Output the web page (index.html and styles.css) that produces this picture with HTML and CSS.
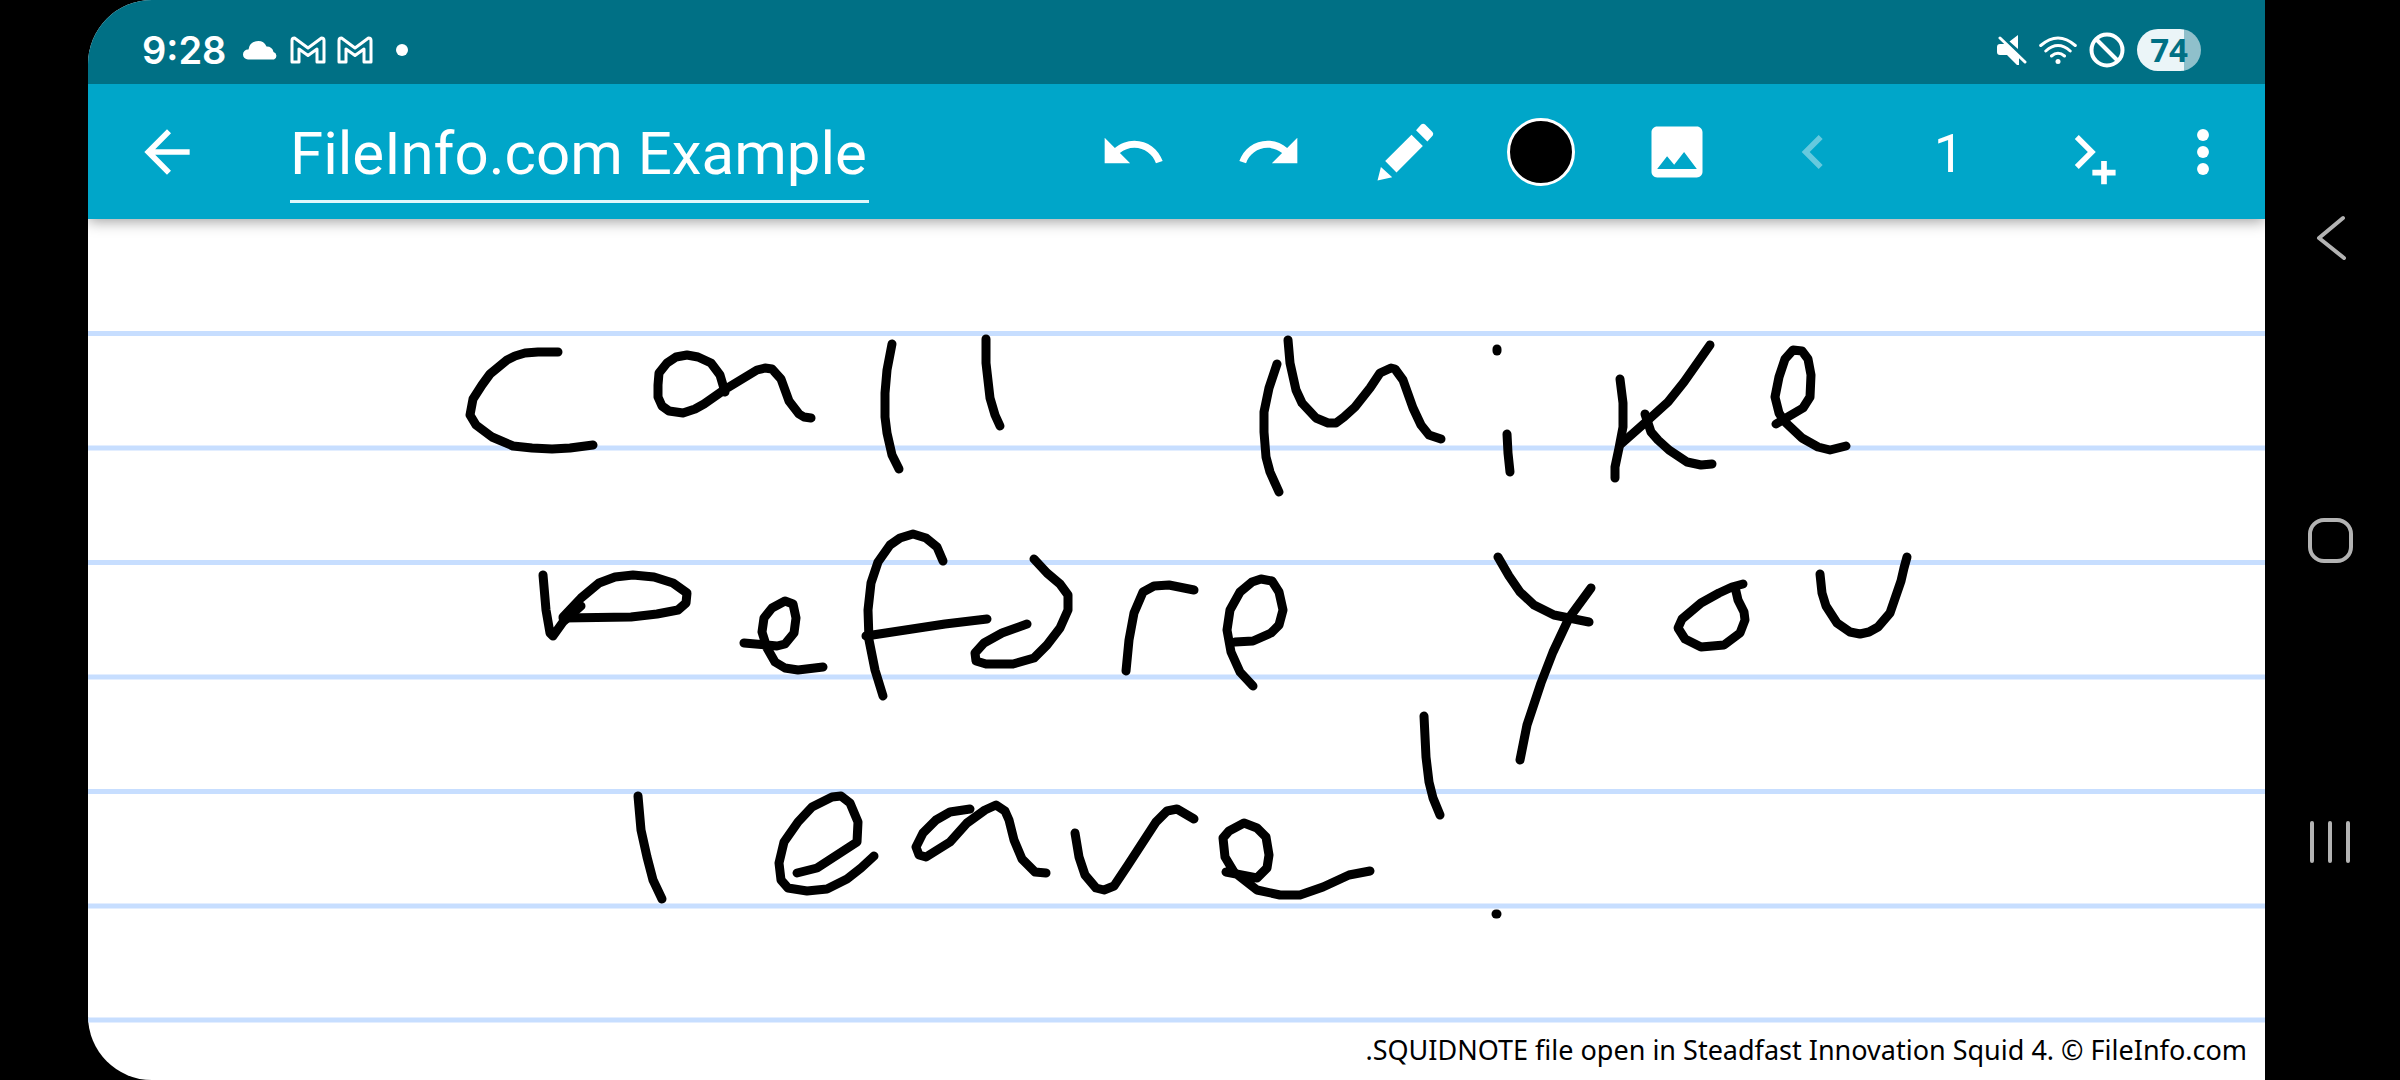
FILE: index.html
```
<!DOCTYPE html>
<html lang="en">
<head>
  <meta charset="utf-8">
  <title>FileInfo.com Example</title>
  <link rel="stylesheet" href="styles.css">
</head>
<body>

<div class="device">
  <main class="screen">
    <div class="status-bar">
      <div class="status-left">
        <span class="clock">9:28</span>
        <svg class="status-cloud" viewBox="0 0 36 20"><path d="M5 19.500a5 5 0 0 1 0-10h.5A9.500 9.500 0 0 1 23.500 6.500a7 7 0 0 1 7 5.500a4 4 0 0 1 .5 7.500z" fill="#fff"/></svg>
        <svg class="status-mail" viewBox="0 0 36 28"><path d="M2 26V4.500Q2 2 4.500 2L18 12 31.500 2Q34 2 34 4.500V26H27V13L18 19.500 9 13V26Z"/></svg>
        <svg class="status-mail" viewBox="0 0 36 28"><path d="M2 26V4.500Q2 2 4.500 2L18 12 31.500 2Q34 2 34 4.500V26H27V13L18 19.500 9 13V26Z"/></svg>
        <span class="status-dot"></span>
      </div>
      <div class="status-right">
        <svg class="status-mute" viewBox="0 0 30 30"><path d="M3 9H9L22 21V30H20L10 20H3Q0 20 0 17V12Q0 9 3 9ZM21 0V14L12.500 6.500Z" fill="#fff"/><path d="M3 3L28 27" fill="none" stroke="#fff" stroke-width="3" stroke-linecap="round"/></svg>
        <svg class="status-wifi" viewBox="0 0 38 28"><g fill="none" stroke="#fff" stroke-width="3" stroke-linecap="round"><path d="M1.700 9.500Q19-5.500 36.300 9.500M6.800 15Q19 4 31.200 15M12.500 20Q19 14.500 25.500 20"/></g><circle cx="19" cy="25.500" r="2.500" fill="#fff"/></svg>
        <svg class="status-block" viewBox="0 0 36 36"><g fill="none" stroke="#fff" stroke-width="4"><circle cx="18" cy="18" r="15.500"/><path d="M7.500 7.500L28.500 28.500"/></g></svg>
        <span class="battery">74</span>
      </div>
    </div>

    <header class="toolbar">
      <button class="back" aria-label="Back"><svg class="icon" viewBox="0 0 24 24"><path d="M20 11H7.830l5.590-5.590L12 4l-8 8 8 8 1.410-1.410L7.830 13H20v-2z"/></svg></button>
      <input class="title" type="text" aria-label="Note title" value="FileInfo.com Example">
      <div class="tools">
        <button class="tool" aria-label="Undo"><svg class="icon" viewBox="0 0 24 24"><path d="M12.500 8c-2.650 0-5.050.99-6.900 2.600L2 7v9h9l-3.620-3.620c1.390-1.160 3.160-1.880 5.120-1.880 3.540 0 6.550 2.310 7.600 5.500l2.370-.78C21.080 11.030 17.150 8 12.500 8z"/></svg></button>
        <button class="tool" aria-label="Redo"><svg class="icon" viewBox="0 0 24 24"><path d="M18.400 10.600C16.550 8.990 14.150 8 11.500 8c-4.650 0-8.580 3.030-9.960 7.220L3.900 16c1.050-3.190 4.050-5.500 7.600-5.500 1.950 0 3.730.72 5.120 1.880L13 16h9V7l-3.600 3.600z"/></svg></button>
        <button class="tool" aria-label="Pen"><svg class="icon" viewBox="0 0 24 24"><path d="M17.700 2.300Q18.400 1.800 19.100 2.300L21.700 4.900Q22.200 5.500 21.800 6.200L19.900 8.300 15.900 4.300ZM14.300 5.900L18.300 9.900 9 19.200 5 15.200ZM3.500 17.300L7.500 20.900 2.300 22.100Z"/></svg></button>
        <button class="tool" aria-label="Colour"><span class="swatch"></span></button>
        <button class="tool" aria-label="Insert image"><svg class="icon" viewBox="0 0 24 24"><path d="M21 19V5c0-1.100-.9-2-2-2H5c-1.100 0-2 .9-2 2v14c0 1.100.9 2 2 2h14c1.100 0 2-.9 2-2zM8.500 13.500l2.500 3.010L14.500 12l4.500 6H5l3.500-4.500z"/></svg></button>
        <button class="tool" aria-label="Previous page" disabled><svg class="icon" viewBox="0 0 24 24"><path d="M15.410 7.410L14 6l-6 6 6 6 1.410-1.410L10.830 12z"/></svg></button>
        <button class="tool page-number">1</button>
        <button class="tool" aria-label="Add page"><svg class="icon" viewBox="0 0 24 24"><path d="M9.800 6l6 6-6 6-1.400-1.400 4.600-4.600-4.600-4.600zM17.700 15.200h2v3.100h3.100v2h-3.100v3.100h-2v-3.100h-3.100v-2h3.100z"/></svg></button>
        <button class="tool more" aria-label="More options"><svg class="icon" viewBox="0 0 24 24"><circle cx="12" cy="6" r="2.100"/><circle cx="12" cy="12" r="2.100"/><circle cx="12" cy="18" r="2.100"/></svg></button>
      </div>
    </header>

    <section class="note">
      <svg class="page" viewBox="88 219 2177 861" preserveAspectRatio="xMinYMin slice" role="img" aria-label="Call Mike before you leave!">
        <path class="rule" d="M88 333.500H2265M88 448H2265M88 562.500H2265M88 677H2265M88 791.500H2265M88 906H2265M88 1020H2265"/>
        <g class="ink">
          <!-- call -->
          <path d="M558 352H538L525 353 515 356 507 360 490 374 482 385 473 399 470 415 476 425 492 437 513 446 532 448 552 449 570 448 593 445"/>
          <path d="M725 392L720 375 711 363 698 357 687 355 676 357 667 363 659 373 658 385 658 397 662 406 669 411 683 413 695 409 704 404 724 390 757 370 765 368 772 369 781 379 789 401 799 414 804 417 811 418"/>
          <path d="M892 344L887 370 885 393 885 417 887 433 892 455 899 469"/>
          <path d="M986 339L986 363 990 398 995 415 1000 426"/>
          <!-- mike -->
          <path d="M1277 364L1269 388 1264 412 1264 432 1266 457 1270 472 1279 492"/>
          <path d="M1288 340L1290 363 1296 390 1302 403 1316 418 1328 423 1336 423 1344 417 1355 407 1370 388 1380 373 1391 368 1395 369 1403 380 1413 408 1421 425 1429 435 1441 439"/>
          <path d="M1497 349V351"/>
          <path d="M1507 434L1508 453 1510 472"/>
          <path d="M1620 379L1623 403 1623 427 1619 448 1615 467 1615 478"/>
          <path d="M1710 345L1684 382 1668 402 1647 421 1621 444"/>
          <path d="M1645 414L1651 432 1658 440 1669 450 1687 462 1701 465 1712 464"/>
          <path d="M1776 424L1803 408 1810 397 1811 375 1808 359 1802 351 1793 350 1785 359 1779 377 1775 397 1779 413 1784 421 1802 438 1818 447 1830 450 1846 446"/>
          <!-- before -->
          <path d="M543 575L546 610 550 633 553 636 563 622 581 606"/>
          <path d="M563 617L581 598 599 583 615 577 633 575 654 577 673 583 687 593 686 603 678 610 657 614 631 617 563 618"/>
          <path d="M744 643L777 646 785 644 794 633 796 618 793 604 785 601 772 608 764 618 762 632 767 648 775 662 785 668 798 670 823 667"/>
          <path d="M943 561L937 547 926 538 913 534 900 538 890 545 878 562 871 583 868 610 869 640 875 670 883 696"/>
          <path d="M866 636L945 624 987 619"/>
          <path d="M1034 559L1047 573 1060 584 1068 595 1068 610 1060 628 1047 645 1034 658 1013 664 986 664 976 661 975 653 984 643 1002 633 1027 624"/>
          <path d="M1126 671L1129 640 1134 613 1143 592 1154 586 1169 585 1194 590"/>
          <path d="M1235 642L1253 641 1271 633 1279 625 1283 610 1279 592 1272 581 1261 579 1252 582 1240 592 1230 610 1227 630 1231 652 1240 672 1253 686"/>
          <!-- you -->
          <path d="M1498 557L1509 576 1520 592 1534 605 1554 615 1589 622"/>
          <path d="M1591 588L1569 618 1553 652 1541 683 1527 725 1520 760"/>
          <path d="M1743 584L1732 587 1719 593 1701 603 1682 619 1678 628 1685 639 1701 647 1724 645 1740 633 1745 620 1744 612 1738 600 1735 587"/>
          <path d="M1820 574L1822 593 1826 606 1837 623 1850 632 1860 634 1869 632 1878 627 1890 613 1901 581 1904 568 1907 557"/>
          <!-- leave! -->
          <path d="M638 796L641 830 647 857 653 880 662 899"/>
          <path d="M797 873L817 868 857 842 858 822 850 803 841 796 832 797 812 807 798 822 784 842 779 863 781 880 788 888 807 891 827 889 847 879 861 868 874 856"/>
          <path d="M970 809L950 812 936 820 923 833 916 847 919 855 926 857 950 842 967 823 985 810 996 805 1005 811 1009 820 1014 840 1022 859 1035 872 1046 873"/>
          <path d="M1075 833L1079 857 1085 875 1096 888 1104 890 1114 886 1128 865 1156 822 1167 811 1177 809 1194 819"/>
          <path d="M1226 872L1257 878 1267 868 1269 855 1266 837 1257 828 1244 823 1229 831 1223 838 1225 857 1234 872 1257 890 1280 895 1300 895 1323 887 1349 875 1370 871"/>
          <path d="M1424 716L1426 757 1429 782 1433 798 1440 815"/>
          <path d="M1496 914H1497"/>
        </g>
      </svg>
      <p class="caption">.SQUIDNOTE file open in Steadfast Innovation Squid 4. © FileInfo.com</p>
    </section>
  </main>

  <nav class="nav-bar">
    <button aria-label="Back"><svg viewBox="0 0 48 48"><path d="M37 4L13 24 38 44"/></svg></button>
    <button aria-label="Home"><svg viewBox="0 0 48 48"><rect x="4" y="4" width="41" height="41" rx="14"/></svg></button>
    <button aria-label="Recent apps"><svg viewBox="0 0 48 48"><path d="M6 5V43M24 5V43M42 5V43"/></svg></button>
  </nav>
</div>

</body>
</html>
```

FILE: styles.css
```
* {
  box-sizing: border-box;
}
body {
  margin: 0;
  background: #000;
  font-family: Roboto, sans-serif;
}
button {
  padding: 0;
  border: 0;
  background: none;
  color: #fff;
  font: inherit;
}
svg {
  display: block;
}
.device {
  display: flex;
  height: 100vh;
  padding-left: 88px;
}
.screen {
  flex: 1;
  min-width: 0;
  display: flex;
  flex-direction: column;
  overflow: hidden;
  background: #fff;
  border-radius: 64px 0 0 64px;
}

/* status bar */
.status-bar {
  position: relative;
  z-index: 2;
  display: flex;
  justify-content: space-between;
  height: 84px;
  padding: 16px 64px 0 54px;
  background: #007085;
  color: #fff;
}
.status-left,
.status-right {
  display: flex;
  align-items: center;
}
.status-left {
  gap: 11px;
}
.status-right {
  gap: 12px;
}
.clock {
  margin-right: 6px;
  font: 600 38px/68px Inter, sans-serif;
}
.status-cloud {
  width: 36px;
  height: 20px;
}
.status-mail {
  width: 36px;
  height: 28px;
  fill: none;
  stroke: #fff;
  stroke-width: 3;
  stroke-linejoin: round;
}
.status-dot {
  width: 12px;
  height: 12px;
  margin-left: 12px;
  border-radius: 50%;
  background: #fff;
}
.status-mute {
  width: 30px;
  height: 30px;
}
.status-wifi {
  width: 38px;
  height: 28px;
}
.status-block {
  width: 36px;
  height: 36px;
}
.battery {
  width: 64px;
  height: 42px;
  border-radius: 21px;
  background: linear-gradient(to right, #ebf5f8 74%, #8fc0cb 74%);
  color: #007085;
  font: bold 33px/42px "Open Sans", sans-serif;
  text-align: center;
}

/* toolbar */
.toolbar {
  position: relative;
  z-index: 1;
  display: flex;
  align-items: center;
  height: 135px;
  background: #00a6c9;
  box-shadow: 0 2px 14px rgba(0, 0, 0, 0.4);
}
.icon {
  width: 68px;
  height: 68px;
  margin: 0 auto;
  fill: #fff;
}
.back {
  width: 158px;
}
.title {
  width: 579px;
  height: 102px;
  margin: 0 0 0 44px;
  padding: 6px 0 0;
  border: 0;
  border-bottom: 3px solid #e0f7fb;
  background: none;
  color: #fff;
  font: 60px Roboto, sans-serif;
}
.tools {
  display: flex;
  align-items: center;
  margin-left: auto;
  padding-right: 12px;
}
.tool {
  width: 136px;
}
.tool:disabled {
  opacity: 0.4;
}
.swatch {
  display: block;
  width: 68px;
  height: 68px;
  margin: 0 auto;
  border: 3px solid #fff;
  border-radius: 50%;
  background: #000;
}
.page-number {
  padding-top: 4px;
  font-size: 54px;
}
.more {
  width: 100px;
}

/* note page */
.note {
  position: relative;
  flex: 1;
  min-height: 0;
}
.page {
  width: 100%;
  height: 100%;
}
.rule {
  stroke: #c7deff;
  stroke-width: 5;
}
.ink {
  fill: none;
  stroke: #000;
  stroke-width: 9;
  stroke-linecap: round;
  stroke-linejoin: round;
}
.caption {
  position: absolute;
  right: 18px;
  bottom: 12px;
  margin: 0;
  color: #000;
  font: 27px/36px "Noto Sans", sans-serif;
}

/* system navigation */
.nav-bar {
  display: flex;
  flex-direction: column;
  width: 135px;
  padding: 87px 6px 87px 0;
}
.nav-bar button {
  flex: 1;
}
.nav-bar svg {
  width: 48px;
  height: 48px;
  margin: 0 auto;
  fill: none;
  stroke: #b3b3b3;
  stroke-width: 4;
  stroke-linecap: round;
  stroke-linejoin: round;
}
```
